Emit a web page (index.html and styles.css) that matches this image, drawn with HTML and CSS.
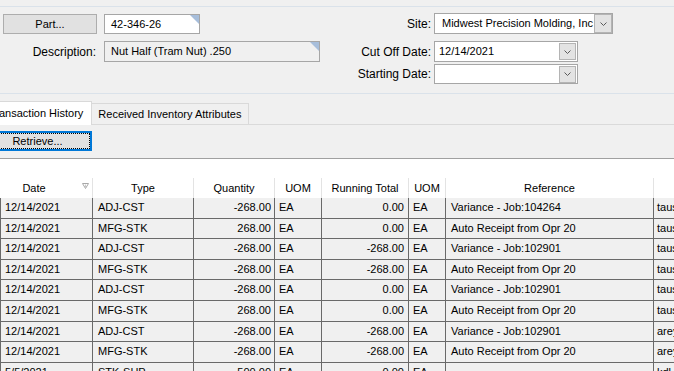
FILE: index.html
```html
<!DOCTYPE html>
<html>
<head>
<meta charset="utf-8">
<link rel="stylesheet" href="styles.css">
</head>
<body>
<div class="page">
  <section class="form">
    <div class="form-left">
      <div class="frow">
        <button class="btn part-btn">Part...</button>
        <div class="field part-field">42-346-26<span class="corner"></span></div>
      </div>
      <div class="frow">
        <label class="lbl desc-lbl">Description:</label>
        <div class="field desc-field">Nut Half (Tram Nut) .250<span class="corner"></span></div>
      </div>
    </div>
    <div class="form-right">
      <div class="frow site-row">
        <label class="lbl rlbl">Site:</label>
        <div class="combo site-combo">
          <span class="val">Midwest Precision Molding, Inc</span>
          <span class="dd dd-site"><svg width="7" height="4" viewBox="0 0 7 4"><polyline points="0.5,0.5 3.5,3.5 6.5,0.5" fill="none" stroke="#5a5a5a" stroke-width="1"/></svg></span>
        </div>
      </div>
      <div class="frow">
        <label class="lbl rlbl">Cut Off Date:</label>
        <div class="combo date-combo">
          <span class="val">12/14/2021</span>
          <span class="dd dd-date"><svg width="7" height="4" viewBox="0 0 7 4"><polyline points="0.5,0.5 3.5,3.5 6.5,0.5" fill="none" stroke="#5a5a5a" stroke-width="1"/></svg></span>
        </div>
      </div>
      <div class="frow">
        <label class="lbl rlbl">Starting Date:</label>
        <div class="combo date-combo short">
          <span class="val"></span>
          <span class="dd dd-date"><svg width="7" height="4" viewBox="0 0 7 4"><polyline points="0.5,0.5 3.5,3.5 6.5,0.5" fill="none" stroke="#5a5a5a" stroke-width="1"/></svg></span>
        </div>
      </div>
    </div>
  </section>

  <div class="tabs">
    <div class="tab tab-active">Transaction History</div>
    <div class="tab">Received Inventory Attributes</div>
  </div>

  <div class="toolbar">
    <button class="retrieve"><span class="focus">Retrieve...</span></button>
  </div>

  <div class="grid">
    <div class="hrow">
      <div class="h h-date"><span class="htext">Date</span><svg class="sort" width="7" height="6" viewBox="0 0 7 6"><polygon points="0.5,0.5 6.5,0.5 3.5,5.5" fill="none" stroke="#a8a8a8" stroke-width="1"/><line x1="3.5" y1="1.5" x2="3.5" y2="4" stroke="#c8c8c8" stroke-width="1"/></svg></div>
      <div class="h">Type</div>
      <div class="h">Quantity</div>
      <div class="h">UOM</div>
      <div class="h">Running Total</div>
      <div class="h">UOM</div>
      <div class="h">Reference</div>
      <div class="h">User</div>
    </div>

    <div class="row"><div class="c c1">12/14/2021</div><div class="c c2">ADJ-CST</div><div class="c r c3">-268.00</div><div class="c c4">EA</div><div class="c r c5">0.00</div><div class="c c6">EA</div><div class="c c7">Variance - Job:104264</div><div class="c c8">tausch</div></div>
    <div class="row"><div class="c c1">12/14/2021</div><div class="c c2">MFG-STK</div><div class="c r c3">268.00</div><div class="c c4">EA</div><div class="c r c5">0.00</div><div class="c c6">EA</div><div class="c c7">Auto Receipt from Opr 20</div><div class="c c8">tausch</div></div>
    <div class="row"><div class="c c1">12/14/2021</div><div class="c c2">ADJ-CST</div><div class="c r c3">-268.00</div><div class="c c4">EA</div><div class="c r c5">-268.00</div><div class="c c6">EA</div><div class="c c7">Variance - Job:102901</div><div class="c c8">tausch</div></div>
    <div class="row"><div class="c c1">12/14/2021</div><div class="c c2">MFG-STK</div><div class="c r c3">-268.00</div><div class="c c4">EA</div><div class="c r c5">-268.00</div><div class="c c6">EA</div><div class="c c7">Auto Receipt from Opr 20</div><div class="c c8">tausch</div></div>
    <div class="row"><div class="c c1">12/14/2021</div><div class="c c2">ADJ-CST</div><div class="c r c3">-268.00</div><div class="c c4">EA</div><div class="c r c5">0.00</div><div class="c c6">EA</div><div class="c c7">Variance - Job:102901</div><div class="c c8">tausch</div></div>
    <div class="row"><div class="c c1">12/14/2021</div><div class="c c2">MFG-STK</div><div class="c r c3">268.00</div><div class="c c4">EA</div><div class="c r c5">0.00</div><div class="c c6">EA</div><div class="c c7">Auto Receipt from Opr 20</div><div class="c c8">tausch</div></div>
    <div class="row"><div class="c c1">12/14/2021</div><div class="c c2">ADJ-CST</div><div class="c r c3">-268.00</div><div class="c c4">EA</div><div class="c r c5">-268.00</div><div class="c c6">EA</div><div class="c c7">Variance - Job:102901</div><div class="c c8">areyes</div></div>
    <div class="row"><div class="c c1">12/14/2021</div><div class="c c2">MFG-STK</div><div class="c r c3">-268.00</div><div class="c c4">EA</div><div class="c r c5">-268.00</div><div class="c c6">EA</div><div class="c c7">Auto Receipt from Opr 20</div><div class="c c8">areyes</div></div>
    <div class="row"><div class="c c1">5/5/2021</div><div class="c c2">STK-SHP</div><div class="c r c3">-500.00</div><div class="c c4">EA</div><div class="c r c5">0.00</div><div class="c c6">EA</div><div class="c c7"></div><div class="c c8">kdl</div></div>
  </div>
</div>
</body>
</html>
```
FILE: styles.css
```css
* { box-sizing: border-box; }

html, body {
  margin: 0;
  padding: 0;
  width: 674px;
  height: 371px;
  overflow: hidden;
  background: #f0f0f0;
}

body {
  font-family: "Liberation Sans", Arial, sans-serif;
  font-size: 11px;
  color: #000;
}

.page {
  width: 674px;
  height: 371px;
  overflow: hidden;
}

/* ---------- top form ---------- */
.form {
  margin-top: 6px;
  height: 88px;
  border-top: 1px solid #dae2ea;
  border-bottom: 1px solid #dae2ea;
  display: flex;
}

.form-left {
  width: 320px;
  padding: 6px 0 0 3px;
  display: flex;
  flex-direction: column;
  gap: 7px;
}

.frow {
  display: flex;
  align-items: center;
}

.form-left .frow {
  gap: 7px;
}

.lbl {
  font-size: 12px;
  white-space: nowrap;
}

.btn {
  font: inherit;
  color: #000;
  background: #e1e1e1;
  border: 1px solid #adadad;
  padding: 0;
  margin: 0;
  height: 20px;
  width: 94px;
  margin-top: 1px;
}

.field {
  position: relative;
  height: 20px;
  border: 1px solid #a6a6a6;
  background: #fff;
  padding: 0 0 0 6px;
  line-height: 18px;
  white-space: nowrap;
}

.part-field { width: 96px; }

.desc-lbl {
  width: 94px;
  text-align: right;
  padding-right: 1px;
}

.desc-field {
  width: 216px;
  background: #f0f0f0;
  height: 21px;
  line-height: 19px;
}

.corner {
  position: absolute;
  top: 0;
  right: 0;
  width: 0;
  height: 0;
  border-top: 9px solid #a7bedb;
  border-left: 9px solid transparent;
}

.form-right {
  margin-left: 31px;
  padding-top: 6px;
  display: flex;
  flex-direction: column;
  gap: 2px;
}

.site-row { margin-bottom: 5px; }

.rlbl {
  width: 80px;
  text-align: right;
  margin-right: 3px;
}

.combo {
  display: flex;
  align-items: center;
  height: 21px;
  background: #fff;
  border: 1px solid #a6a6a6;
  padding: 0 1px 0 0;
}

.combo .val {
  flex: 1;
  overflow: hidden;
  white-space: nowrap;
  line-height: 19px;
}

.site-combo { width: 179px; padding: 0; }
.site-combo .val { padding-left: 7px; }

.date-combo { width: 144px; }
.date-combo .val { padding-left: 4px; }
.date-combo.short { height: 20px; }

.dd {
  display: flex;
  align-items: center;
  justify-content: center;
  background: #e3e3e3;
  border: 1px solid #b4b4b4;
}

.dd-site {
  width: 18px;
  height: 19px;
}

.dd-date {
  width: 17px;
  height: 17px;
}

/* ---------- tabs ---------- */
.tabs {
  display: flex;
  align-items: flex-end;
  height: 24px;
  margin: 7px 0 0 -20px;
  border-bottom: 1px solid #dadada;
}

.tab {
  height: 21px;
  line-height: 20px;
  padding: 0 7px 0 6px;
  border: 1px solid #d9d9d9;
  border-left: none;
  border-bottom: none;
  white-space: nowrap;
}

.tab-active {
  height: 24px;
  margin-bottom: -1px;
  line-height: 22px;
  background: #fff;
  border-left: 1px solid #d9d9d9;
  padding: 0 8px;
}

/* ---------- toolbar ---------- */
.toolbar {
  height: 34px;
  padding-top: 6px;
  border-bottom: 1px solid #a0a0a0;
}

.retrieve {
  display: flex;
  margin: 0 0 0 -17px;
  padding: 0;
  width: 109px;
  height: 20px;
  background: #e1e1e1;
  border: 2px solid #0078d7;
  font: inherit;
  color: #000;
}

.focus {
  flex: 1;
  border: 1px dotted #000;
  line-height: 14px;
  text-align: center;
}

/* ---------- grid ---------- */
.grid {
  background: #fff;
  padding-top: 19px;
  height: 212px;
}

.hrow,
.row {
  display: grid;
  grid-template-columns: 92px 101px 81px 47px 87px 37px 208px 100px;
  width: 760px;
}

.hrow {
  height: 20px;
  border-left: 1px solid transparent;
  background: #fff;
}

.h {
  border-right: 1px solid #e3e3e3;
  text-align: center;
  line-height: 20px;
  white-space: nowrap;
}

.h-date {
  display: flex;
  align-items: flex-start;
}

.htext {
  flex: 1;
  text-align: center;
  padding-right: 15px;
}

.sort {
  margin: 5px 3px 0 0;
}

.row {
  height: 20.6px;
  background: #f0f0f0;
  border-left: 1px solid #696969;
  border-bottom: 1px solid #696969;
}

.c {
  border-right: 1px solid #696969;
  padding: 0 4px;
  line-height: 19.6px;
  white-space: nowrap;
  overflow: hidden;
}

.c.r { text-align: right; }
.c2, .c7 { padding-left: 5px; }
.c3 { padding-right: 3px; }
.c5 { padding-right: 4px; }
.c8 { padding-left: 3px; }
```
